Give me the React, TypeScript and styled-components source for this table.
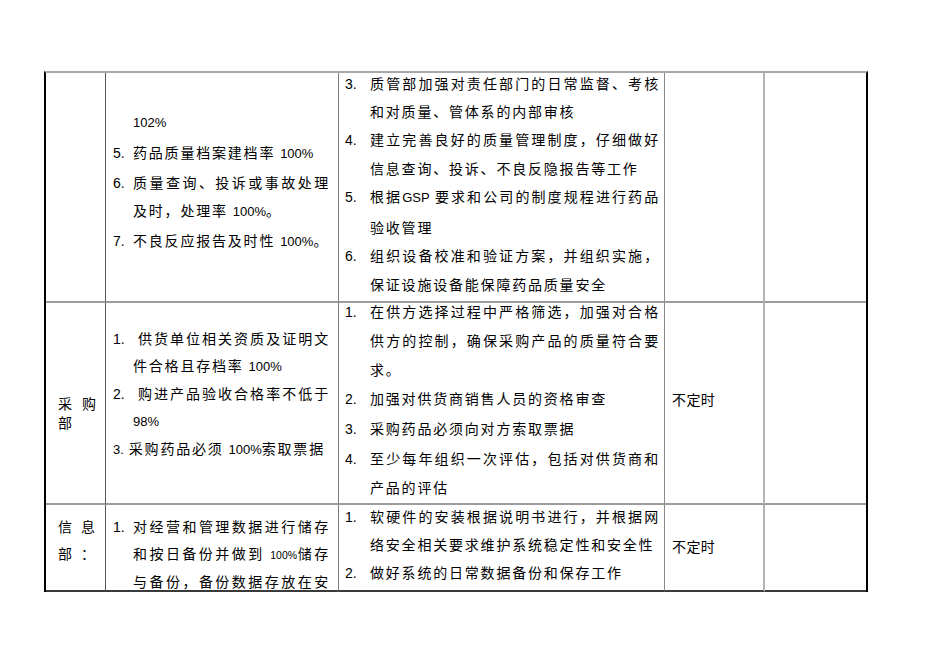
import React from 'react';
import styled, { createGlobalStyle } from 'styled-components';

const GlobalStyle = createGlobalStyle`
  html, body {
    margin: 0;
    padding: 0;
    background: #ffffff;
  }
  body {
    font-family: "Noto Sans CJK SC", "Liberation Sans", sans-serif;
    color: #000000;
  }
`;

const Page = styled.div`
  box-sizing: border-box;
  min-height: 672px;
  padding: 71px 0 0 44px;
`;

const Table = styled.div`
  display: grid;
  grid-template-columns: 60px 233px 326px 100px 101px;
  grid-template-rows: 230px 202px 87px;
  width: 820px;
  border-top: 2px solid #a8a8a8;
  border-left: 2px solid #000000;
  border-right: 2px solid #000000;
`;

type Col = 1 | 2 | 3 | 4 | 5;

const rightBorder: Record<Col, string> = {
  1: '1px solid #555555',
  2: '1px solid #7c7c7c',
  3: '1px solid #8a8a8a',
  4: '2px solid #b4b4b4',
  5: 'none',
};

const padLeft: Record<Col, number> = { 1: 12, 2: 7, 3: 6, 4: 7, 5: 7 };
const padRight: Record<Col, number> = { 1: 2, 2: 8, 3: 4, 4: 4, 5: 4 };

const Cell = styled.div<{ $col: Col; $last?: boolean; $mid?: boolean; $pt?: number; $pb?: number }>`
  box-sizing: border-box;
  display: flex;
  flex-direction: column;
  justify-content: ${(p) => (p.$mid ? 'center' : 'flex-start')};
  min-width: 0;
  padding: ${(p) => p.$pt ?? 0}px ${(p) => padRight[p.$col]}px ${(p) => p.$pb ?? 0}px
    ${(p) => padLeft[p.$col]}px;
  border-right: ${(p) => rightBorder[p.$col]};
  border-bottom: 2px solid ${(p) => (p.$last ? '#3a3a3a' : '#9c9c9c')};
`;

const Text = styled.div<{ $lh: number; $shift?: number; $ls?: number }>`
  margin-top: ${(p) => p.$shift ?? 0}px;
  font-size: 14px;
  line-height: ${(p) => p.$lh}px;
  letter-spacing: ${(p) => p.$ls ?? 1.8}px;
`;

const Latin = styled.span<{ $size?: number }>`
  font-family: "Liberation Sans", Arial, sans-serif;
  font-size: ${(p) => p.$size ?? 13}px;
  letter-spacing: 0;
`;

const Item = styled.div`
  display: flex;
  align-items: baseline;
`;

const Num = styled.div<{ $w: number }>`
  flex: none;
  width: ${(p) => p.$w}px;
  font-family: "Liberation Sans", Arial, sans-serif;
  font-size: 14px;
  letter-spacing: 0;
`;

const Body = styled.div`
  flex: 1;
  min-width: 0;
`;

const Line = styled.div<{ $justify?: boolean; $indent?: number }>`
  padding-left: ${(p) => p.$indent ?? 0}px;
  white-space: ${(p) => (p.$justify ? 'normal' : 'nowrap')};
  text-align: ${(p) => (p.$justify ? 'justify' : 'left')};
  text-align-last: ${(p) => (p.$justify ? 'justify' : 'auto')};
`;

const rich = (s: string) =>
  s
    .split(/([A-Za-z0-9%.]+)/)
    .filter(Boolean)
    .map((part, i) =>
      /^[A-Za-z0-9%.]+$/.test(part) ? (
        <Latin key={i}>{part}</Latin>
      ) : (
        <React.Fragment key={i}>{part}</React.Fragment>
      )
    );

type LineSpec = { t: React.ReactNode; j?: boolean; indent?: number };
type ItemSpec = { n: string; lines: LineSpec[] };

const L = (t: string, j?: boolean, indent?: number): LineSpec => ({ t: rich(t), j, indent });

const Items = ({ items, numW }: { items: ItemSpec[]; numW: number }) => (
  <>
    {items.map((it, i) => (
      <Item key={i}>
        <Num $w={numW}>{it.n || '\u00a0'}</Num>
        <Body>
          {it.lines.map((ln, k) => (
            <Line key={k} $justify={ln.j} $indent={ln.indent}>
              {ln.t}
            </Line>
          ))}
        </Body>
      </Item>
    ))}
  </>
);

const qualityTargets: ItemSpec[] = [
  { n: '', lines: [L('102%')] },
  { n: '5.', lines: [L('药品质量档案建档率 100%')] },
  { n: '6.', lines: [L('质量查询、投诉或事故处理', true), L('及时，处理率 100%。')] },
  { n: '7.', lines: [L('不良反应报告及时性 100%。')] },
];

const qualityMeasures: ItemSpec[] = [
  { n: '3.', lines: [L('质管部加强对责任部门的日常监督、考核', true), L('和对质量、管体系的内部审核')] },
  { n: '4.', lines: [L('建立完善良好的质量管理制度，仔细做好', true), L('信息查询、投诉、不良反隐报告等工作')] },
  { n: '5.', lines: [L('根据GSP 要求和公司的制度规程进行药品', true), L('验收管理')] },
  { n: '6.', lines: [L('组织设备校准和验证方案，并组织实施，', true), L('保证设施设备能保障药品质量安全')] },
];

const purchaseTargets: ItemSpec[] = [
  { n: '1.', lines: [L('供货单位相关资质及证明文', true, 5), L('件合格且存档率 100%')] },
  { n: '2.', lines: [L('购进产品验收合格率不低于', true, 5), L('98%')] },
];

const purchaseMeasures: ItemSpec[] = [
  {
    n: '1.',
    lines: [
      L('在供方选择过程中严格筛选，加强对合格', true),
      L('供方的控制，确保采购产品的质量符合要', true),
      L('求。'),
    ],
  },
  { n: '2.', lines: [L('加强对供货商销售人员的资格审查')] },
  { n: '3.', lines: [L('采购药品必须向对方索取票据')] },
  { n: '4.', lines: [L('至少每年组织一次评估，包括对供货商和', true), L('产品的评估')] },
];

const infoTargets: ItemSpec[] = [
  {
    n: '1.',
    lines: [
      L('对经营和管理数据进行储存', true),
      {
        t: (
          <>
            和按日备份并做到 <Latin $size={10.5}>100%</Latin>储存
          </>
        ),
        j: true,
      },
      L('与备份，备份数据存放在安', true),
    ],
  },
];

const infoMeasures: ItemSpec[] = [
  {
    n: '1.',
    lines: [L('软硬件的安装根据说明书进行，并根据网', true), L('络安全相关要求维护系统稳定性和安全性')],
  },
  { n: '2.', lines: [L('做好系统的日常数据备份和保存工作')] },
];

const App = () => {
  return (
    <Page>
      <GlobalStyle />
      <Table>
        {/* 质量管理部（续） */}
        <Cell $col={1} />
        <Cell $col={2} $mid $pb={10}>
          <Text $lh={28.3}>
            <Items items={qualityTargets} numW={20} />
          </Text>
        </Cell>
        <Cell $col={3}>
          <Text $lh={28.43} $shift={-4.5}>
            <Items items={qualityMeasures} numW={25} />
          </Text>
        </Cell>
        <Cell $col={4} />
        <Cell $col={5} />

        {/* 采购部 */}
        <Cell $col={1} $mid $pt={20}>
          <Text $lh={19} $ls={10}>
            <Line>采购</Line>
            <Line>部</Line>
          </Text>
        </Cell>
        <Cell $col={2} $mid $pb={18}>
          <Text $lh={27}>
            <Items items={purchaseTargets} numW={20} />
            <Line>{rich('3. 采购药品必须 100%索取票据')}</Line>
          </Text>
        </Cell>
        <Cell $col={3}>
          <Text $lh={29} $shift={-6.2}>
            <Items items={purchaseMeasures} numW={25} />
          </Text>
        </Cell>
        <Cell $col={4} $mid $pb={9}>
          <Text $lh={28} $ls={0.4}>
            不定时
          </Text>
        </Cell>
        <Cell $col={5} />

        {/* 信息部 */}
        <Cell $col={1} $last $pt={8}>
          <Text $lh={26.5} $ls={9}>
            <Line>信息</Line>
            <Line>部：</Line>
          </Text>
        </Cell>
        <Cell $col={2} $last $pt={8}>
          <Text $lh={26.5}>
            <Items items={infoTargets} numW={20} />
          </Text>
        </Cell>
        <Cell $col={3} $last>
          <Text $lh={28} $shift={-3}>
            <Items items={infoMeasures} numW={25} />
          </Text>
        </Cell>
        <Cell $col={4} $last $mid $pb={4}>
          <Text $lh={28} $ls={0.4}>
            不定时
          </Text>
        </Cell>
        <Cell $col={5} $last />
      </Table>
    </Page>
  );
};

export default App;
